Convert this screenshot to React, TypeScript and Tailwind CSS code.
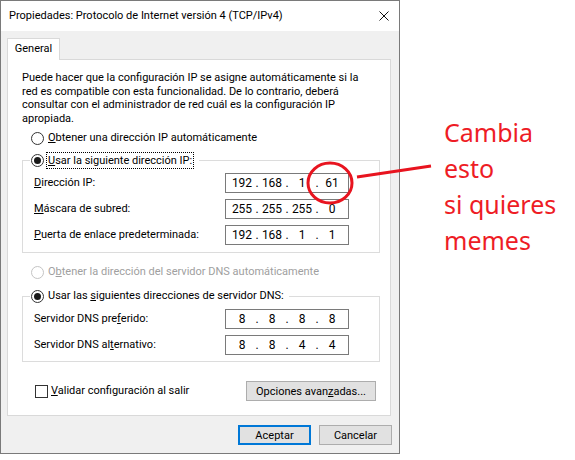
import { Fragment } from 'react';

const ui = "font-['Segoe_UI',Roboto,sans-serif] text-[11px] text-black";

function Radio({ checked, disabled }: { checked?: boolean; disabled?: boolean }) {
  return (
    <span
      className={`inline-flex h-[13px] w-[13px] shrink-0 items-center justify-center rounded-full border bg-white ${
        disabled ? 'border-[#c4c4c4]' : 'border-[#333333]'
      }`}
    >
      {checked && <span className="h-[7px] w-[7px] rounded-full bg-[#1a1a1a]" />}
    </span>
  );
}

function IpBox({ parts }: { parts: string[] }) {
  return (
    <div className="flex h-5 w-[124px] items-center border border-[#7a7a7a] bg-white pl-[4px] text-[12px] leading-none">
      {parts.map((p, i) => (
        <Fragment key={i}>
          {i > 0 && <span className="w-[6px] text-center">.</span>}
          <span className="w-[24px] text-center">{p}</span>
        </Fragment>
      ))}
    </div>
  );
}

function Row({ label, parts }: { label: React.ReactNode; parts: string[] }) {
  return (
    <div className="flex h-5 items-center justify-between">
      <span>{label}</span>
      <IpBox parts={parts} />
    </div>
  );
}

function Btn({ children, primary }: { children: React.ReactNode; primary?: boolean }) {
  return (
    <button
      className={`flex h-5 items-center justify-center bg-[#e1e1e1] leading-none ${
        primary ? 'w-[73px] border-2 border-[#0078d7]' : 'border border-[#adadad]'
      }`}
    >
      {children}
    </button>
  );
}

export default function App() {
  return (
    <div className={`relative flex h-[460px] w-[575px] bg-white ${ui}`}>
      {/* Dialog */}
      <div className="flex h-[454px] w-[400px] shrink-0 flex-col border border-[#7a7a7a] bg-[#f0f0f0]">
        <div className="flex h-[30px] items-center justify-between bg-white pl-2 pr-[9px] text-[11px]">
          <span>Propiedades: Protocolo de Internet versión 4 (TCP/IPv4)</span>
          <svg width="10" height="10" viewBox="0 0 10 10" className="mr-[1px]">
            <path d="M0.5 0.5 L9.5 9.5 M9.5 0.5 L0.5 9.5" stroke="#111" strokeWidth="1" />
          </svg>
        </div>

        <div className="flex flex-col pl-[6px] pr-[7px] pt-[7px]">
          <div className="relative z-10 -mb-px flex h-[22px] w-[53px] items-center justify-center border border-b-0 border-[#d9d9d9] bg-white pb-[1px]">
            General
          </div>

          {/* Tab panel */}
          <div className="flex h-[357px] w-[384px] flex-col border border-[#d9d9d9] bg-white">
            <p className="pl-[14px] pt-[11px] leading-[13.5px]">
              Puede hacer que la configuración IP se asigne automáticamente si la
              <br />
              red es compatible con esta funcionalidad. De lo contrario, deberá
              <br />
              consultar con el administrador de red cuál es la configuración IP
              <br />
              apropiada.
            </p>

            <div className="mt-[3px] flex h-5 items-center gap-[4px] pl-[23px]">
              <Radio />
              <span>
                <u>O</u>btener una dirección IP automáticamente
              </span>
            </div>

            <fieldset className="ml-[14px] mt-[2px] w-[358px] border border-[#dcdcdc] pb-[7px] pl-[11px] pr-[30px]">
              <legend className="ml-[-4px] flex h-5 items-center gap-[2px] pl-[1px] pr-[5px]">
                <Radio checked />
                <span className="border border-dotted border-black px-[1px] leading-[15px]">
                  <u>U</u>sar la siguiente dirección IP:
                </span>
              </legend>
              <div className="mt-[3px] flex flex-col gap-[6px]">
                <Row label={<><u>D</u>irección IP:</>} parts={['192', '168', '1', '61']} />
                <Row label={<><u>M</u>áscara de subred:</>} parts={['255', '255', '255', '0']} />
                <Row label={<><u>P</u>uerta de enlace predeterminada:</>} parts={['192', '168', '1', '1']} />
              </div>
            </fieldset>

            <div className="mt-[9px] flex h-5 items-center gap-[4px] pl-[23px] text-[#a0a0a0]">
              <Radio disabled />
              <span>
                O<u>b</u>tener la dirección del servidor DNS automáticamente
              </span>
            </div>

            <fieldset className="ml-[14px] mt-[4px] w-[358px] border border-[#dcdcdc] pb-[6px] pl-[11px] pr-[30px]">
              <legend className="ml-[-4px] flex h-5 items-center gap-[4px] pl-[1px] pr-[5px]">
                <Radio checked />
                <span>
                  Usar las <u>s</u>iguientes direcciones de servidor DNS:
                </span>
              </legend>
              <div className="mt-[3px] flex flex-col gap-[6px]">
                <Row label={<>Servidor DNS pre<u>f</u>erido:</>} parts={['8', '8', '8', '8']} />
                <Row label={<>Servidor DNS al<u>t</u>ernativo:</>} parts={['8', '8', '4', '4']} />
              </div>
            </fieldset>

            <div className="mt-[19px] flex h-5 items-center justify-between pl-[27px] pr-[14px]">
              <div className="flex items-center gap-[3px]">
                <span className="h-[13px] w-[13px] border border-[#333333] bg-white" />
                <span>
                  <u>V</u>alidar configuración al salir
                </span>
              </div>
              <Btn>
                <span className="w-[128px]">
                  Opciones avan<u>z</u>adas...
                </span>
              </Btn>
            </div>
          </div>

          <div className="mt-[9px] flex justify-end gap-[8px]">
            <Btn primary>Aceptar</Btn>
            <Btn>
              <span className="w-[71px]">Cancelar</span>
            </Btn>
          </div>
        </div>
      </div>

      {/* Annotation text */}
      <div className="ml-[44px] pt-[114px] font-['Segoe_UI','Noto_Sans',sans-serif] text-[25px] leading-[36px] text-[#ee1c25]">
        <div>Cambia</div>
        <div>esto</div>
        <div>si quieres</div>
        <div>memes</div>
      </div>

      {/* Red circle and pointer line drawn over the dialog */}
      <svg className="pointer-events-none absolute left-0 top-0" width="575" height="460">
        <ellipse cx="330" cy="183" rx="22" ry="20" fill="none" stroke="#e8141f" strokeWidth="3" />
        <line x1="357" y1="177" x2="431" y2="166" stroke="#e8141f" strokeWidth="3" />
      </svg>
    </div>
  );
}
